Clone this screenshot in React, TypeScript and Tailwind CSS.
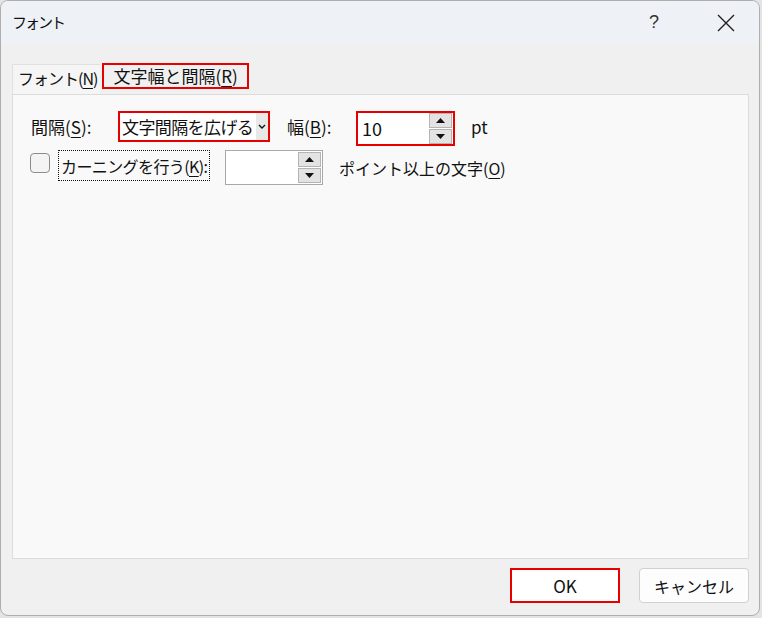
import { ReactNode } from 'react';

const font = { fontFamily: '"Noto Sans CJK JP", "Noto Sans", sans-serif' };

function U({ children }: { children: ReactNode }) {
  return <span className="underline underline-offset-[3px] decoration-1">{children}</span>;
}

function SpinButtons({ className = '' }: { className?: string }) {
  return (
    <div className={`flex flex-col gap-[1px] w-[23px] ${className}`}>
      <div className="h-[15px] bg-[#e3e3e3] border border-[#b4b4b4] flex items-center justify-center">
        <svg width="9" height="5" viewBox="0 0 9 5">
          <path d="M0 5 L4.5 0 L9 5 Z" fill="#111" />
        </svg>
      </div>
      <div className="h-[15px] bg-[#e3e3e3] border border-[#b4b4b4] flex items-center justify-center">
        <svg width="9" height="5" viewBox="0 0 9 5">
          <path d="M0 0 L4.5 5 L9 0 Z" fill="#111" />
        </svg>
      </div>
    </div>
  );
}

export default function App() {
  return (
    <div className="w-[762px] h-[618px] bg-[#e4e4e4] text-[#111]" style={font}>
      <div className="w-[760px] h-[616px] rounded-[8px] border border-[#aeaeae] bg-[#f0f0f0] overflow-hidden flex flex-col">
        {/* Title bar */}
        <div className="h-[43px] bg-[#eef2f7] flex items-center pl-[11px] shrink-0">
          <span className="text-[15px] tracking-[-2px]">フォント</span>
          <span className="ml-auto text-[18px] text-[#333] mr-[58px]" style={{ fontFamily: '"Liberation Sans", sans-serif' }}>?</span>
          <svg className="mr-[24px]" width="18" height="18" viewBox="0 0 18 18">
            <path d="M1 1 L17 17 M17 1 L1 17" stroke="#222" strokeWidth="1.4" />
          </svg>
        </div>

        <div className="pl-[11px] pt-[19px] flex flex-col">
          {/* Tabs */}
          <div className="h-[31px] flex items-start">
            <div className="h-[31px] mt-[1px] pl-[5px] pr-[3px] pb-[5px] flex items-center text-[16px] tracking-[-1px] bg-[#f5f5f5] border-t border-l border-[#e0e0e0]">
              フォント(<U>N</U>)
            </div>
            <div className="h-[26px] ml-[2px] px-[9px] flex items-center text-[17px] border-2 border-[#e60000]">
              文字幅と間隔(<U>R</U>)
            </div>
          </div>

          {/* Panel */}
          <div className="w-[737px] h-[465px] bg-[#f9f9f9] border border-[#dcdcdc] pt-[16px] pl-[18px] flex flex-col text-[16px]">
            <div className="flex items-start h-[34px]">
              <span className="w-[87px] h-[32px] flex items-center text-[17px] whitespace-nowrap">
                間隔(<U>S</U>):
              </span>
              <div className="w-[152px] h-[31px] border-2 border-[#e60000] bg-white flex items-center">
                <span className="pl-[2px] text-[17px] tracking-[-0.6px] whitespace-nowrap">文字間隔を広げる</span>
                <div className="ml-auto w-[12px] h-full bg-[#e8e8e8] flex items-center justify-center">
                  <svg width="8" height="5" viewBox="0 0 8 5">
                    <path d="M1 1 L4 4 L7 1" stroke="#111" strokeWidth="1.4" fill="none" />
                  </svg>
                </div>
              </div>
              <span className="ml-[17px] w-[69px] h-[32px] flex items-center text-[17px] whitespace-nowrap">
                幅(<U>B</U>):
              </span>
              <div className="w-[99px] h-[35px] border-2 border-[#e60000] bg-white flex items-center">
                <span className="pl-[4px] text-[18px]">10</span>
                <SpinButtons className="ml-auto mr-[1px]" />
              </div>
              <span className="ml-[16px] h-[32px] flex items-center text-[17px]">pt</span>
            </div>

            <div className="flex items-start mt-[5px]">
              <div className="mt-[3px] -ml-[1px] w-[20px] h-[20px] rounded-[4px] border border-[#8c8c8c] bg-[#f4f4f4]" />
              <div className="ml-[8px] w-[152px] h-[31px] pl-[2px] border border-dotted border-[#111] flex items-center whitespace-nowrap tracking-[-0.6px] text-[16px]">
                カーニングを行う(<U>K</U>):
              </div>
              <div className="ml-[15px] w-[98px] h-[35px] border border-[#a8a8a8] bg-white flex items-center">
                <SpinButtons className="ml-auto mr-[1px]" />
              </div>
              <span className="ml-[16px] h-[35px] flex items-center whitespace-nowrap">
                ポイント以上の文字(<U>O</U>)
              </span>
            </div>
          </div>

          {/* Buttons */}
          <div className="flex justify-end gap-[19px] mt-[9px] w-[737px]">
            <button className="w-[110px] h-[35px] bg-white border-2 border-[#e60000] text-[17px]">OK</button>
            <button className="w-[110px] h-[35px] bg-[#fdfdfd] border border-[#d0d0d0] rounded-[4px] text-[16px]">
              キャンセル
            </button>
          </div>
        </div>
      </div>
    </div>
  );
}
